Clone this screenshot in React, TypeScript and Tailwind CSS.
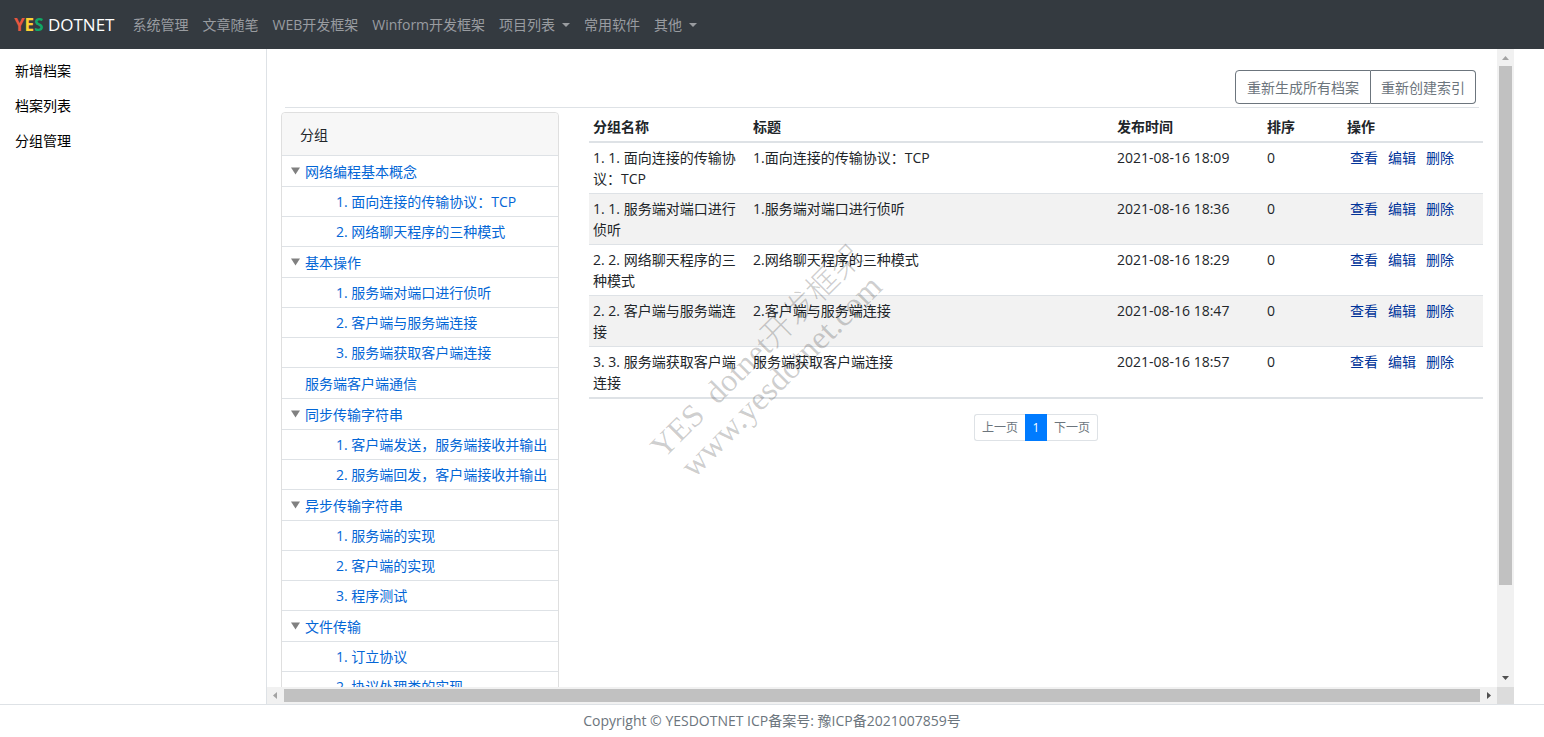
type NavItem = { label: string; dropdown?: boolean };
type TreeNode = { label: string; children?: string[] };

const navItems: NavItem[] = [
  { label: '系统管理' },
  { label: '文章随笔' },
  { label: 'WEB开发框架' },
  { label: 'Winform开发框架' },
  { label: '项目列表', dropdown: true },
  { label: '常用软件' },
  { label: '其他', dropdown: true },
];

const sideItems = ['新增档案', '档案列表', '分组管理'];

const tree: TreeNode[] = [
  { label: '网络编程基本概念', children: ['1. 面向连接的传输协议：TCP', '2. 网络聊天程序的三种模式'] },
  { label: '基本操作', children: ['1. 服务端对端口进行侦听', '2. 客户端与服务端连接', '3. 服务端获取客户端连接'] },
  { label: '服务端客户端通信' },
  { label: '同步传输字符串', children: ['1. 客户端发送，服务端接收并输出', '2. 服务端回发，客户端接收并输出'] },
  { label: '异步传输字符串', children: ['1. 服务端的实现', '2. 客户端的实现', '3. 程序测试'] },
  { label: '文件传输', children: ['1. 订立协议', '2. 协议处理类的实现'] },
];

const rows = [
  { group: '1. 1. 面向连接的传输协议：TCP', title: '1.面向连接的传输协议：TCP', time: '2021-08-16 18:09', order: 0 },
  { group: '1. 1. 服务端对端口进行侦听', title: '1.服务端对端口进行侦听', time: '2021-08-16 18:36', order: 0 },
  { group: '2. 2. 网络聊天程序的三种模式', title: '2.网络聊天程序的三种模式', time: '2021-08-16 18:29', order: 0 },
  { group: '2. 2. 客户端与服务端连接', title: '2.客户端与服务端连接', time: '2021-08-16 18:47', order: 0 },
  { group: '3. 3. 服务端获取客户端连接', title: '服务端获取客户端连接', time: '2021-08-16 18:57', order: 0 },
];

function Navbar() {
  return (
    <header className="flex h-[49px] shrink-0 items-center bg-[#343a40] px-3.5">
      <a href="#" className="mr-[11px] whitespace-nowrap text-[17px] leading-6 text-white">
        <b className="text-[#e8563f]">Y</b>
        <b className="text-[#fdd033]">E</b>
        <b className="text-[#12a768]">S</b> DOTNET
      </a>
      <nav className="flex whitespace-nowrap text-[#999ca0]">
        {navItems.map((item) => (
          <a key={item.label} href="#" className="flex items-center px-[7px]">
            {item.label}
            {item.dropdown && (
              <svg width="8" height="4" viewBox="0 0 8 4" className="ml-[7px]" aria-hidden="true">
                <path d="M0 0h8L4 4z" fill="currentColor" />
              </svg>
            )}
          </a>
        ))}
      </nav>
    </header>
  );
}

function Sidebar() {
  return (
    <aside className="w-[267px] shrink-0 border-r border-[#dee2e6] pt-1 text-black">
      {sideItems.map((label) => (
        <a key={label} href="#" className="block px-[15px] py-[7px]">
          {label}
        </a>
      ))}
    </aside>
  );
}

function GroupTree() {
  return (
    <section className="w-[278px] shrink-0 self-start rounded border border-[#dfdfdf]">
      <h2 className="flex h-[42px] items-center rounded-t bg-[#f7f7f7] px-[18px]">分组</h2>
      <ul className="text-[#0366d6]">
        {tree.map((node) => (
          <li key={node.label}>
            <div className="flex h-[31px] items-center border-t border-[#dee2e6] pl-[9px]">
              {node.children ? (
                <button type="button" aria-label={'折叠 ' + node.label} className="flex w-3.5">
                  <svg width="9" height="8" viewBox="0 0 9 8" aria-hidden="true">
                    <path d="M0 0.5h9L4.5 7.5z" fill="#808080" />
                  </svg>
                </button>
              ) : (
                <span className="w-3.5" />
              )}
              <a href="#">{node.label}</a>
            </div>
            {node.children && (
              <ul>
                {node.children.map((child) => (
                  <li key={child} className="flex h-[30px] items-center border-t border-[#dee2e6] pl-[54px]">
                    <a href="#" className="whitespace-nowrap">{child}</a>
                  </li>
                ))}
              </ul>
            )}
          </li>
        ))}
      </ul>
    </section>
  );
}

function ArchiveTable() {
  return (
    <table className="w-full table-fixed border-separate border-spacing-0 border-b-2 border-[#dee2e6] text-left">
      <colgroup>
        <col className="w-40" />
        <col />
        <col className="w-[150px]" />
        <col className="w-20" />
        <col className="w-[140px]" />
      </colgroup>
      <thead>
        <tr>
          {['分组名称', '标题', '发布时间', '排序', '操作'].map((h) => (
            <th key={h} className="border-b-2 border-[#dee2e6] px-1 py-1 font-bold">
              {h}
            </th>
          ))}
        </tr>
      </thead>
      <tbody className="[&_td]:border-[#dee2e6] [&_td]:px-1 [&_td]:py-1 [&_td]:align-top [&_tr+tr_td]:border-t">
        {rows.map((row) => (
          <tr key={row.group} className="even:bg-[#f2f2f2]">
            <td>{row.group}</td>
            <td>{row.title}</td>
            <td>{row.time}</td>
            <td>{row.order}</td>
            <td>
              <div className="flex gap-2.5 pl-[3px] text-[#003399]">
                <a href="#">查看</a>
                <a href="#">编辑</a>
                <a href="#">删除</a>
              </div>
            </td>
          </tr>
        ))}
      </tbody>
    </table>
  );
}

function Pagination() {
  return (
    <nav aria-label="分页" className="mt-[15px] flex justify-center text-xs text-[#6c757d]">
      <a href="#" className="flex h-[27px] items-center rounded-l-[3px] border border-r-0 border-[#dee2e6] px-[7px]">
        上一页
      </a>
      <a href="#" className="flex h-[27px] w-[22px] items-center justify-center bg-[#007bff] text-white">
        1
      </a>
      <a href="#" className="flex h-[27px] items-center rounded-r-[3px] border border-l-0 border-[#dee2e6] px-[7px]">
        下一页
      </a>
    </nav>
  );
}

function VerticalScrollbar() {
  return (
    <div className="flex w-[17px] shrink-0 flex-col items-center bg-[#f1f1f1]" aria-hidden="true">
      <svg width="17" height="17" viewBox="0 0 17 17" className="shrink-0">
        <path d="M5 11h7L8.500 7z" fill="#a3a3a3" />
      </svg>
      <div className="min-h-0 flex-1">
        <div className="h-[86%] w-[13px] bg-[#c1c1c1]" />
      </div>
      <svg width="17" height="17" viewBox="0 0 17 17" className="shrink-0">
        <path d="M5 6h7L8.500 10z" fill="#505050" />
      </svg>
    </div>
  );
}

function HorizontalScrollbar() {
  return (
    <div className="flex h-[17px] shrink-0" aria-hidden="true">
      <div className="flex flex-1 items-center bg-[#f1f1f1]">
        <svg width="17" height="17" viewBox="0 0 17 17" className="shrink-0">
          <path d="M10 5v7L6 8.500z" fill="#a3a3a3" />
        </svg>
        <div className="h-[13px] flex-1 bg-[#c1c1c1]" />
        <svg width="17" height="17" viewBox="0 0 17 17" className="shrink-0">
          <path d="M7 5v7L11 8.500z" fill="#505050" />
        </svg>
      </div>
      <div className="w-[17px] bg-[#dcdcdc]" />
    </div>
  );
}

function Watermark() {
  return (
    <div
      aria-hidden="true"
      className="pointer-events-none absolute left-[502px] top-[315px] -translate-x-1/2 -translate-y-1/2 -rotate-45 whitespace-nowrap text-center font-['Liberation_Serif','Noto_Sans_CJK_SC',serif] text-[33px] font-light leading-[35px] text-black/20"
    >
      <div className="text-[32px]">YES&nbsp; dotnet开发框架</div>
      <div>www.yesdotnet.com</div>
    </div>
  );
}

export default function App() {
  return (
    <div className="flex h-screen flex-col overflow-hidden bg-white font-['Open_Sans','Noto_Sans_CJK_SC',sans-serif] text-sm leading-[21px] text-[#212529]">
      <Navbar />
      <div className="flex min-h-0 flex-1">
        <Sidebar />
        <div className="mr-[30px] flex min-w-0 flex-1 flex-col">
          <div className="flex min-h-0 flex-1">
            <main className="relative min-w-0 flex-1 overflow-hidden">
              <div className="mx-[18px] flex justify-end border-b border-[#dee2e6] pb-[3px] pr-[3px] pt-[21px] text-[#6c757d]">
                <button type="button" className="h-[34px] rounded-l border border-[#6c757d] px-[11px]">
                  重新生成所有档案
                </button>
                <button type="button" className="h-[34px] rounded-r border border-l-0 border-[#6c757d] px-2.5">
                  重新创建索引
                </button>
              </div>
              <div className="flex gap-[30px] px-3.5 pt-1">
                <GroupTree />
                <div className="min-w-0 flex-1">
                  <ArchiveTable />
                  <Pagination />
                </div>
              </div>
              <Watermark />
            </main>
            <VerticalScrollbar />
          </div>
          <HorizontalScrollbar />
        </div>
      </div>
      <footer className="flex h-[33px] shrink-0 items-center justify-center border-t border-[#dee2e6] pb-0.5 text-[#6c757d]">
        Copyright © YESDOTNET ICP备案号: 豫ICP备2021007859号
      </footer>
    </div>
  );
}
